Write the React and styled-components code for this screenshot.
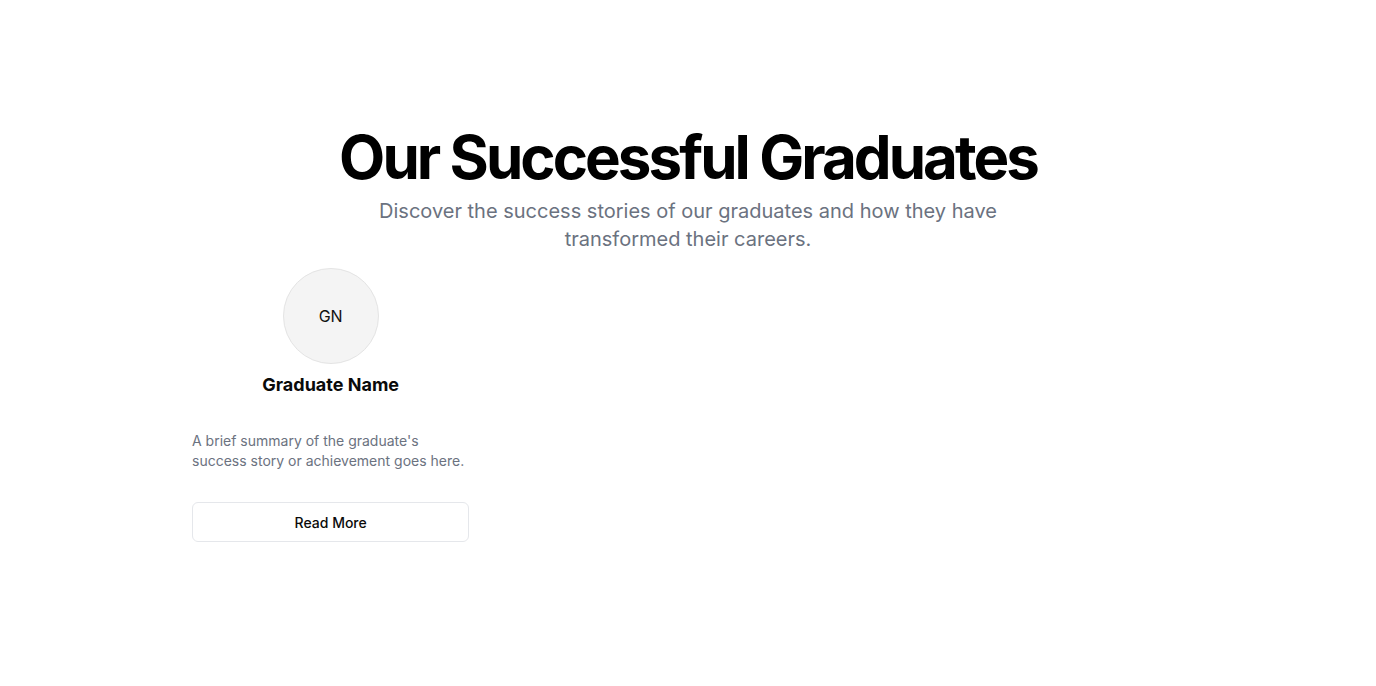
import React from 'react';
import styled, { createGlobalStyle } from 'styled-components';

const GlobalStyle = createGlobalStyle`
  html, body {
    margin: 0;
    padding: 0;
    background: #ffffff;
    font-family: Inter, "Noto Sans", sans-serif;
    color: #0a0a0a;
  }
  * { box-sizing: border-box; }
`;

const Section = styled.section`
  padding-top: 127px;
  display: flex;
  justify-content: center;
`;

const Container = styled.div`
  width: 992px;
  display: flex;
  flex-direction: column;
  align-items: center;
`;

const Title = styled.h1`
  margin: 0;
  font-size: 60px;
  line-height: 1;
  font-weight: 700;
  letter-spacing: -0.049em;
  color: #000;
  text-align: center;
`;

const Subtitle = styled.p`
  margin: 10px 0 0;
  max-width: 640px;
  font-size: 20px;
  line-height: 28px;
  color: #6b7280;
  text-align: center;
`;

const Grid = styled.div`
  width: 100%;
  margin-top: 15px;
  display: grid;
  grid-template-columns: repeat(3, 1fr);
  gap: 80px;
`;

const Card = styled.div`
  display: flex;
  flex-direction: column;
`;

const CardHeader = styled.div`
  display: flex;
  flex-direction: column;
  align-items: center;
  gap: 7px;
`;

const Avatar = styled.div`
  width: 96px;
  height: 96px;
  border-radius: 50%;
  background: #f4f4f4;
  border: 1px solid #e4e4e4;
  display: flex;
  align-items: center;
  justify-content: center;
  font-size: 16px;
  color: #111;
`;

const Name = styled.h3`
  margin: 0;
  font-size: 18px;
  line-height: 28px;
  font-weight: 700;
  color: #0a0a0a;
`;

const Summary = styled.p`
  margin: 32px 0 0;
  font-size: 14px;
  line-height: 20px;
  color: #6b7280;
`;

const Button = styled.button`
  margin-top: 31px;
  height: 40px;
  width: 100%;
  border: 1px solid #e5e7eb;
  border-radius: 6px;
  background: #fff;
  font-family: inherit;
  font-size: 14px;
  font-weight: 500;
  color: #0a0a0a;
  cursor: pointer;
`;

const graduates = [
  {
    initials: 'GN',
    name: 'Graduate Name',
    summary: "A brief summary of the graduate's success story or achievement goes here.",
  },
];

export default function App() {
  return (
    <>
      <GlobalStyle />
      <Section>
        <Container>
          <Title>Our Successful Graduates</Title>
          <Subtitle>
            Discover the success stories of our graduates and how they have transformed their careers.
          </Subtitle>
          <Grid>
            {graduates.map((g, i) => (
              <Card key={i}>
                <CardHeader>
                  <Avatar>{g.initials}</Avatar>
                  <Name>{g.name}</Name>
                </CardHeader>
                <Summary>{g.summary}</Summary>
                <Button>Read More</Button>
              </Card>
            ))}
          </Grid>
        </Container>
      </Section>
    </>
  );
}
